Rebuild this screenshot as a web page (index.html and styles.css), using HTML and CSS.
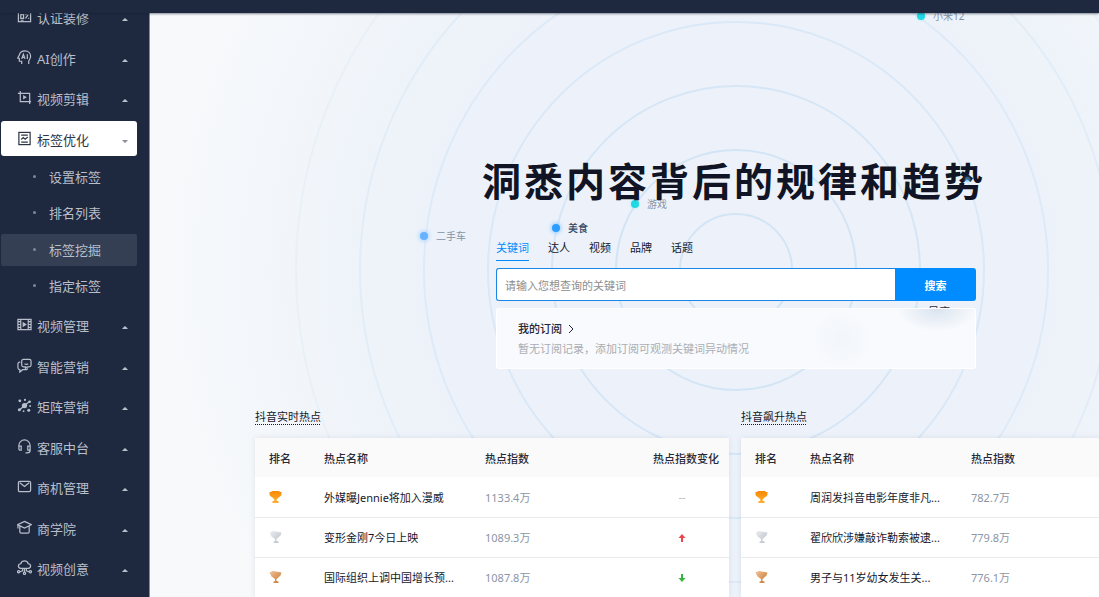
FILE: index.html
```html
<!DOCTYPE html>
<html lang="zh-CN">
<head>
    <meta charset="UTF-8">
    <meta name="viewport" content="width=device-width, initial-scale=1.0">
    <title>标签挖掘</title>
    <link rel="stylesheet" href="styles.css">
</head>
<body>
    <!-- shared shapes -->
    <svg class="defs" width="0" height="0" aria-hidden="true">
        <defs>
            <linearGradient id="gold" x1="0" y1="0" x2="0" y2="1"><stop offset="0" stop-color="#f58a07"/><stop offset="1" stop-color="#ffb02e"/></linearGradient>
            <linearGradient id="silver" x1="0" y1="0" x2="1" y2="1"><stop offset="0" stop-color="#eceef1"/><stop offset="1" stop-color="#b9bfc8"/></linearGradient>
            <linearGradient id="bronze" x1="0" y1="0" x2="1" y2="1"><stop offset="0" stop-color="#f2c29a"/><stop offset="1" stop-color="#c4762f"/></linearGradient>
            <symbol id="cup" viewBox="0 0 12 12">
                <path d="M2 0h8v1h2v2.500C12 4.500 10.800 5.900 9.300 6.200 8.600 7.400 7.800 7.800 7.200 8v2H9v2H3v-2h1.800V8C4.200 7.800 3.400 7.400 2.700 6.200 1.200 5.900 0 4.500 0 3.500V1h2z"/>
            </symbol>
            <symbol id="goblet" viewBox="0 0 12 12">
                <path d="M0 1.500 3.500 0 12 1.500 11 4.500 7.500 7.800 7 8v2l2 .6V12H4v-1.400L5.500 10V8L2 5.500z"/>
            </symbol>
            <symbol id="caret" viewBox="0 0 8 4"><path d="M0 4 3 .7q1-.9 2 0L8 4z"/></symbol>
        </defs>
    </svg>

    <header class="topbar"></header>

    <div class="layout">
        <nav class="sidebar">
            <ul class="menu">
                <li><a class="menu-item" href="#">
                    <svg class="icon" viewBox="0 0 16 16"><rect x="1.500" y="3" width="13" height="10.500"/><path d="M1.500 3V1M14.500 3V1M4 6h3v4H4zM9 10l3-4M9 6h1M12 10h1M4 12h3"/></svg>
                    <span>认证装修</span><svg class="caret"><use href="#caret"/></svg></a></li>
                <li><a class="menu-item" href="#">
                    <svg class="icon" viewBox="0 0 16 16"><path d="M5 15v-3H2.500V9L.8 8.500 2.500 5.500C3 2.500 5.500 1 8.500 1c3.500 0 6 2.500 6 5.700 0 2.600-1.200 3.700-2 5V15M5 9.500l1.800-5 1.800 5M5.700 8h2.200M11 4.500v5"/></svg>
                    <span>AI创作</span><svg class="caret"><use href="#caret"/></svg></a></li>
                <li><a class="menu-item" href="#">
                    <svg class="icon" viewBox="0 0 16 16"><path d="M3.500 1v11.500H15M1 3.500h12.500V15"/><path class="fill" d="M6.500 5.200v5l4-2.500z"/></svg>
                    <span>视频剪辑</span><svg class="caret"><use href="#caret"/></svg></a></li>
                <li>
                    <a class="menu-item open" href="#">
                        <svg class="icon" viewBox="0 0 16 16"><rect x="2" y="1.500" width="12" height="13"/><path d="M4.500 4.500h7M4.500 9l2.200-2 2 1.700L11.500 6.500M4.500 11.800h7"/></svg>
                        <span>标签优化</span><svg class="caret"><use href="#caret"/></svg></a>
                    <ul class="submenu">
                        <li><a href="#">设置标签</a></li>
                        <li><a href="#">排名列表</a></li>
                        <li><a class="current" href="#">标签挖掘</a></li>
                        <li><a href="#">指定标签</a></li>
                    </ul>
                </li>
                <li><a class="menu-item" href="#">
                    <svg class="icon" viewBox="0 0 16 16"><path d="M1 2.500h14v11H1zM4 2.500v11M12 2.500v11M1 5h3M1 8h3M1 11h3M12 5h3M12 8h3M12 11h3"/><path class="fill" d="M6 5v6l4.500-3z"/></svg>
                    <span>视频管理</span><svg class="caret"><use href="#caret"/></svg></a></li>
                <li><a class="menu-item" href="#">
                    <svg class="icon" viewBox="0 0 16 16"><path d="M7 1.500h6q2 0 2 2v4q0 2-2 2h-2L9 11V9.500H7q-2 0-2-2v-4q0-2 2-2zM3.500 4.500H3q-2 0-2 2v4q0 2 2 2v2.500l3-2.500h3.500q1.500 0 1.800-1.500M8 6.200q2 1.300 4 0"/></svg>
                    <span>智能营销</span><svg class="caret"><use href="#caret"/></svg></a></li>
                <li><a class="menu-item" href="#">
                    <svg class="icon" viewBox="0 0 16 16"><g class="fill"><circle cx="8" cy="8" r="2.800"/><circle cx="3" cy="3" r="1.500"/><circle cx="8.500" cy="2" r="1.100"/><circle cx="13.500" cy="4" r="1.400"/><circle cx="14" cy="8.500" r="1"/><circle cx="12.500" cy="13" r="1.600"/><circle cx="7" cy="14" r="1"/><circle cx="2.500" cy="12.500" r="1.600"/></g><path d="M3 12.500 8 8l5-4"/></svg>
                    <span>矩阵营销</span><svg class="caret"><use href="#caret"/></svg></a></li>
                <li><a class="menu-item" href="#">
                    <svg class="icon" viewBox="0 0 16 16"><path d="M2 8V7a6 6 0 0 1 12 0v5q0 2.800-3 2.800H9M2 7.500h2.500V12H3.500Q2 12 2 10.500zM14 7.500h-2.500V12h1q1.500 0 1.500-1.500z"/></svg>
                    <span>客服中台</span><svg class="caret"><use href="#caret"/></svg></a></li>
                <li><a class="menu-item" href="#">
                    <svg class="icon" viewBox="0 0 16 16"><rect x="1.500" y="2.500" width="13" height="11" rx="1.500"/><path d="M3 4 8 8l5-4"/></svg>
                    <span>商机管理</span><svg class="caret"><use href="#caret"/></svg></a></li>
                <li><a class="menu-item" href="#">
                    <svg class="icon" viewBox="0 0 16 16"><path d="M8 1.500 15.200 5 8 8.500.8 5zM3 6.500v6q0 1.500 1.500 1.500h7q1.500 0 1.500-1.500v-6M1 5v4"/></svg>
                    <span>商学院</span><svg class="caret"><use href="#caret"/></svg></a></li>
                <li><a class="menu-item" href="#">
                    <svg class="icon" viewBox="0 0 16 16"><path d="M4 9Q1.500 8.500 1.500 6.300 1.600 4.200 4 4 5 1 8 1t4 3q2.400.2 2.500 2.300Q14.500 8.500 12 9zM8 9v4M6 9v2.500L3 12.500M10 9v2.500l3 1"/><circle cx="1.800" cy="12.500" r="1.200"/><circle cx="8" cy="14.200" r="1.200"/><circle cx="14.200" cy="12.500" r="1.200"/></svg>
                    <span>视频创意</span><svg class="caret"><use href="#caret"/></svg></a></li>
            </ul>
        </nav>

        <main class="main">
            <div class="radar">
                <svg class="rings" viewBox="-520 -520 1040 1040" aria-hidden="true">
                    <circle r="56" stroke-opacity="1"/>
                    <circle r="120" stroke-opacity="1"/>
                    <circle r="184" stroke-opacity=".9"/>
                    <circle r="248" stroke-opacity=".75"/>
                    <circle r="312" stroke-opacity=".6"/>
                    <circle r="376" stroke-opacity=".45"/>
                    <circle r="440" stroke-opacity=".3"/>
                </svg>
                <span class="node node-phone">小米12</span>
                <span class="node node-car">二手车</span>
                <span class="node node-food">美食</span>
                <span class="node node-game">游戏</span>
                <span class="node node-star">星座</span>
                <span class="node node-dot"></span>
            </div>

            <section class="hero">
                <h1>洞悉内容背后的规律和趋势</h1>
                <div class="search-panel">
                    <div class="tabs" role="tablist">
                        <button class="tab active" role="tab" aria-selected="true">关键词</button>
                        <button class="tab" role="tab">达人</button>
                        <button class="tab" role="tab">视频</button>
                        <button class="tab" role="tab">品牌</button>
                        <button class="tab" role="tab">话题</button>
                    </div>
                    <form class="search">
                        <input type="text" aria-label="关键词" placeholder="请输入您想查询的关键词">
                        <button type="button">搜索</button>
                    </form>
                    <div class="subscribe">
                        <a href="#">我的订阅
                            <svg viewBox="0 0 6 10"><path d="M1 1l4 4-4 4"/></svg>
                        </a>
                        <p>暂无订阅记录，添加订阅可观测关键词异动情况</p>
                    </div>
                </div>
            </section>

            <section class="boards">
                <div class="board">
                    <h2>抖音实时热点</h2>
                    <table>
                        <thead>
                            <tr><th class="col-rank">排名</th><th class="col-name">热点名称</th><th class="col-index">热点指数</th><th>热点指数变化</th></tr>
                        </thead>
                        <tbody>
                            <tr>
                                <td><svg class="cup gold"><use href="#cup"/></svg></td>
                                <td>外媒曝Jennie将加入漫威</td>
                                <td class="num">1133.4万</td>
                                <td><span class="change">--</span></td>
                            </tr>
                            <tr>
                                <td><svg class="cup silver"><use href="#goblet"/></svg></td>
                                <td>变形金刚7今日上映</td>
                                <td class="num">1089.3万</td>
                                <td><span class="change up"><svg viewBox="0 0 8 8"><path d="M4 0 7.500 4H5v4H3V4H.5z"/></svg></span></td>
                            </tr>
                            <tr>
                                <td><svg class="cup bronze"><use href="#goblet"/></svg></td>
                                <td>国际组织上调中国增长预...</td>
                                <td class="num">1087.8万</td>
                                <td><span class="change down"><svg viewBox="0 0 8 8"><path d="M4 8 .5 4H3V0h2v4h2.500z"/></svg></span></td>
                            </tr>
                        </tbody>
                    </table>
                </div>
                <div class="board">
                    <h2>抖音飙升热点</h2>
                    <table>
                        <thead>
                            <tr><th class="col-rank">排名</th><th class="col-name">热点名称</th><th class="col-index">热点指数</th><th></th></tr>
                        </thead>
                        <tbody>
                            <tr>
                                <td><svg class="cup gold"><use href="#cup"/></svg></td>
                                <td>周润发抖音电影年度非凡...</td>
                                <td class="num">782.7万</td>
                                <td></td>
                            </tr>
                            <tr>
                                <td><svg class="cup silver"><use href="#goblet"/></svg></td>
                                <td>翟欣欣涉嫌敲诈勒索被逮...</td>
                                <td class="num">779.8万</td>
                                <td></td>
                            </tr>
                            <tr>
                                <td><svg class="cup bronze"><use href="#goblet"/></svg></td>
                                <td>男子与11岁幼女发生关...</td>
                                <td class="num">776.1万</td>
                                <td></td>
                            </tr>
                        </tbody>
                    </table>
                </div>
            </section>
        </main>
    </div>
</body>
</html>
```
FILE: styles.css
```css
:root {
    --navy: #1e2940;
    --primary: #008cff;
    --ink: #15182b;
}

* {
    box-sizing: border-box;
}

body {
    margin: 0;
    height: 100vh;
    display: flex;
    flex-direction: column;
    overflow: hidden;
    font-family: "Noto Sans", "Noto Sans CJK SC", sans-serif;
    font-size: 11px;
    color: var(--ink);
}

ul {
    list-style: none;
    margin: 0;
    padding: 0;
}

a {
    color: inherit;
    text-decoration: none;
}

button,
input {
    font: inherit;
}

.defs {
    position: absolute;
}

.topbar {
    flex: none;
    height: 13px;
    background: var(--navy);
    box-shadow: 0 1px 2px rgba(20, 28, 48, 0.5);
    z-index: 2;
}

.layout {
    flex: 1;
    min-height: 0;
    display: flex;
}

/* sidebar */
.sidebar {
    flex: none;
    width: 150px;
    background: var(--navy);
    border-right: 1px solid #868b96;
    color: #b9bfca;
    font-size: 13px;
    overflow: hidden;
}

/* the list is scrolled down a little */
.menu {
    margin-top: -14px;
    padding: 0 12px 0 1px;
}

.menu > li {
    margin-bottom: 5px;
}

.menu > li:nth-child(odd) {
    margin-bottom: 6px;
}

.menu-item {
    display: flex;
    align-items: center;
    height: 35px;
    padding: 0 8px 0 16px;
    border-radius: 3px;
}

.menu-item span {
    flex: 1;
    margin-left: 5px;
    padding-top: 2px;
}

.menu-item.open {
    background: #fff;
    color: #2c3446;
}

.icon {
    width: 15px;
    height: 15px;
    margin-bottom: 1px;
    fill: none;
    stroke: currentColor;
    stroke-width: 1.3;
}

.icon .fill {
    fill: currentColor;
    stroke: none;
}

.caret {
    width: 8px;
    height: 3px;
    margin-top: 6px;
    fill: #b9bfca;
}

.open .caret {
    transform: rotate(180deg);
    fill: #8d929c;
}

.submenu {
    padding-top: 5px;
}

.submenu a {
    display: flex;
    align-items: center;
    height: 32px;
    margin-bottom: 5px;
    padding-left: 32px;
    padding-bottom: 1px;
    border-radius: 2px;
}

.submenu li:nth-child(odd) a {
    margin-bottom: 4px;
}

.submenu li:last-child a {
    margin-bottom: 0;
}

.submenu a::before {
    content: "";
    width: 3px;
    height: 3px;
    margin-right: 13px;
    border-radius: 50%;
    background: #7f8898;
}

.submenu a.current {
    background: #343f54;
}

/* page */
.main {
    flex: 1 0 auto;
    min-width: 1172px;
    position: relative;
    overflow: hidden;
    background: radial-gradient(circle at 50% 257px, #edf2fa 300px, #eff4fa 400px, #f7f9fb 570px);
}

.radar {
    position: absolute;
    top: 257px;
    left: 50%;
}

.rings {
    position: absolute;
    top: -520px;
    left: -520px;
    width: 1040px;
    height: 1040px;
    fill: none;
    stroke: #d3e4f5;
    stroke-width: 2;
}

.node {
    position: absolute;
    display: flex;
    align-items: center;
    gap: 8px;
    font-size: 10px;
    line-height: 14px;
    color: #8592a6;
    white-space: nowrap;
}

.node::before {
    content: "";
    width: 8px;
    height: 8px;
    border-radius: 50%;
    background: #1fd8e3;
    box-shadow: 0 0 3px #9feaf2;
}

.node-phone {
    top: -261px;
    left: 181px;
}

.node-car {
    top: -41px;
    left: -316px;
}

.node-car::before {
    background: #66b2ff;
    box-shadow: 0 0 4px 1px #a5d2ff;
}

.node-food {
    top: -49px;
    left: -184px;
    color: #2e4866;
    font-weight: 500;
}

.node-food::before {
    background: #2b9dff;
    box-shadow: 0 0 4px 1px #8fcbff;
}

.node-game {
    top: -73px;
    left: -105px;
}

.node-star {
    top: 35px;
    left: 176px;
    font-size: 11px;
    color: #1f2b3d;
}

.node-dot {
    top: -93px;
    left: 229px;
    z-index: 2;
}

.node-dot::before {
    width: 5px;
    height: 5px;
    background: #5fbcff;
    opacity: 0.5;
}

.hero {
    position: relative;
    padding-top: 140px;
}

h1 {
    margin: 0 0 27px;
    padding-right: 4px;
    font-size: 39px;
    font-weight: 700;
    line-height: 56px;
    letter-spacing: 3px;
    text-align: center;
    color: #111424;
}

.search-panel {
    width: 480px;
    margin: 0 auto;
}

.tabs {
    display: flex;
    gap: 19px;
    margin-bottom: 7px;
}

.tab {
    padding: 0;
    border: 0;
    border-bottom: 1px solid transparent;
    background: none;
    color: inherit;
    line-height: 24px;
    cursor: pointer;
}

.tab.active {
    color: var(--primary);
    border-color: var(--primary);
}

.search {
    display: flex;
    height: 33px;
    margin-bottom: 7px;
}

.search input {
    flex: 1;
    min-width: 0;
    padding: 2px 8px 0;
    border: 1px solid #1a87e6;
    border-right: 0;
    border-radius: 3px 0 0 3px;
    background: #fff;
    outline: none;
}

.search input::placeholder {
    color: #8e8e8e;
}

.search button {
    width: 81px;
    border: 0;
    border-radius: 0 3px 3px 0;
    background: var(--primary);
    color: #fff;
    font-weight: 700;
    cursor: pointer;
}

.subscribe {
    padding: 10px 21px 9px;
    border: 1px solid #fff;
    border-radius: 2px;
    background:
        radial-gradient(ellipse 40px 22px at 440px 0, rgba(205, 218, 232, 0.7), transparent),
        radial-gradient(circle 30px at 345px 30px, rgba(240, 244, 249, 0.8), transparent),
        #f8fafd;
    line-height: 20px;
}

.subscribe a {
    display: flex;
    align-items: center;
    gap: 6px;
    color: #222638;
    font-weight: 500;
}

.subscribe svg {
    width: 6px;
    height: 10px;
    fill: none;
    stroke: #222638;
}

.subscribe p {
    margin: 0;
    color: #aaadb3;
}

/* hot topic boards */
.boards {
    position: relative;
    display: grid;
    grid-template-columns: repeat(2, 474px);
    gap: 12px;
    max-width: 962px;
    margin: 40px auto 0;
}

.board h2 {
    display: block;
    margin: 0 0 13px;
    font-size: 11px;
    font-weight: 400;
    line-height: 16px;
    text-decoration: underline dotted 1px;
    text-decoration-skip-ink: none;
    text-underline-offset: 3px;
}

.board table {
    width: 100%;
    table-layout: fixed;
    border-collapse: collapse;
    background: #fff;
    box-shadow: 0 0 6px rgba(40, 60, 90, 0.1);
}

th,
td {
    padding: 0 0 0 14px;
    text-align: left;
    white-space: nowrap;
}

th {
    height: 39px;
    background: #fafafa;
    color: #262938;
    font-weight: 500;
}

td {
    height: 40px;
    border-bottom: 1px solid #e9ebee;
}

.col-rank {
    width: 55px;
}

.col-name {
    width: 161px;
}

.col-index {
    width: 168px;
}

.num {
    color: #8b95a5;
}

.cup {
    display: block;
    width: 13px;
    height: 12px;
}

.gold {
    fill: url(#gold);
}

.silver {
    fill: url(#silver);
}

.bronze {
    fill: url(#bronze);
}

.change {
    display: block;
    width: 58px;
    text-align: center;
    color: #b5bac2;
}

.change svg {
    width: 8px;
    height: 8px;
}

.up {
    fill: #e8474c;
}

.down {
    fill: #35b53c;
}
```
